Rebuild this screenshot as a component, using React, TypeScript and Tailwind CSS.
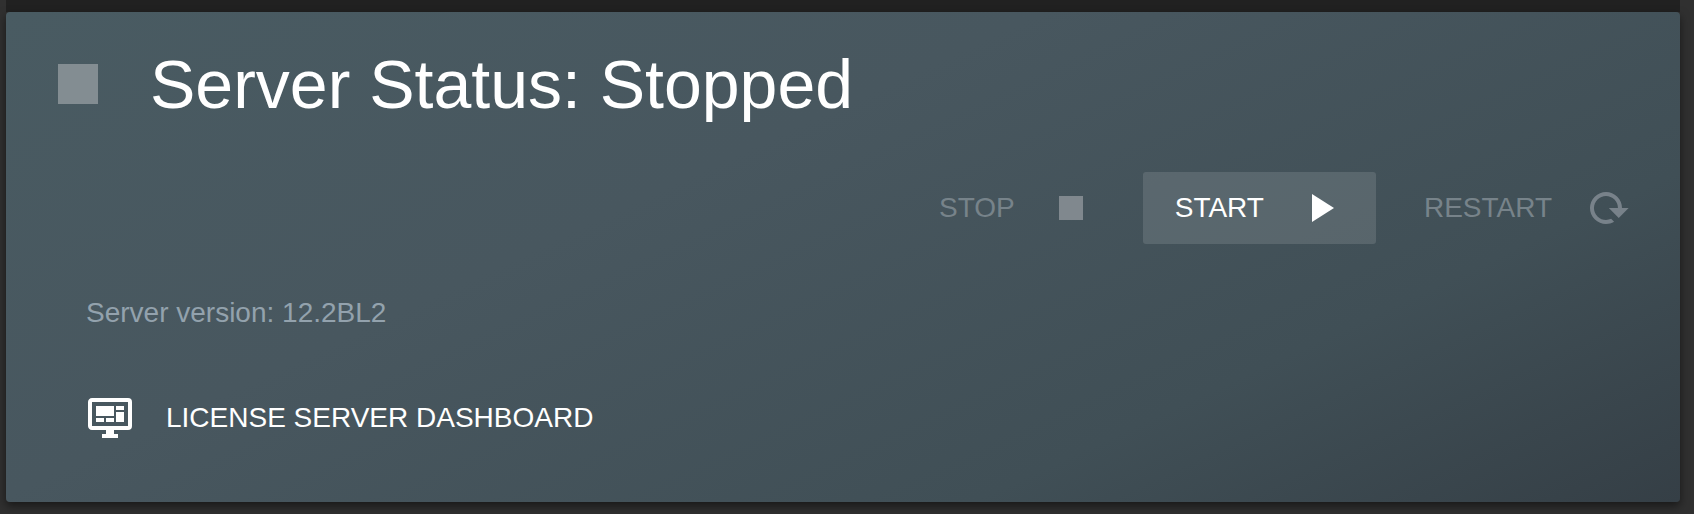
import type { ReactNode } from 'react';
import clsx from 'clsx';

const icons = {
  stop: 'M18,18H6V6H18V18Z',
  play: 'M8,5V19L19,12L8,5Z',
  reload:
    'M19,12H22.32L17.37,16.95L12.42,12H16.97C17,10.46 16.42,8.93 15.24,7.75C12.9,5.41 9.1,5.41 6.76,7.75C4.42,10.09 4.42,13.9 6.76,16.24C8.6,18.08 11.36,18.47 13.58,17.41L15.05,18.88C12,20.69 8,20.29 5.34,17.65C2.22,14.53 2.23,9.47 5.35,6.35C8.5,3.22 13.53,3.21 16.66,6.34C18.22,7.9 19,9.95 19,12Z',
  dashboard:
    'M21,16V4H3V16H21M21,2A2,2 0 0,1 23,4V16A2,2 0 0,1 21,18H14V20H16V22H8V20H10V18H3C1.89,18 1,17.1 1,16V4C1,2.89 1.89,2 3,2H21M5,6H14V11H5V6M15,6H19V8H15V6M19,9V14H15V9H19M5,12H9V14H5V12M10,12H14V14H10V12Z',
};

function Icon({ name, className }: { name: keyof typeof icons; className?: string }) {
  return (
    <svg viewBox="0 0 24 24" fill="currentColor" aria-hidden="true" className={clsx('shrink-0', className)}>
      <path d={icons[name]} />
    </svg>
  );
}

type ActionButtonProps = {
  icon: keyof typeof icons;
  disabled?: boolean;
  iconClass?: string;
  children: ReactNode;
};

function ActionButton({ icon, disabled, iconClass, children }: ActionButtonProps) {
  return (
    <button
      type="button"
      disabled={disabled}
      className={clsx(
        'flex h-[72px] items-center gap-8 rounded-[3px] px-8',
        disabled ? 'text-[#77838a]' : 'bg-white/12 text-white'
      )}
    >
      {children}
      <Icon name={icon} className={clsx('size-12', iconClass)} />
    </button>
  );
}

export default function App() {
  return (
    <main className="min-h-screen bg-[#303030] pr-3.5 pb-3 pl-1.5 font-['Liberation_Sans',Arial,sans-serif] text-[28px] leading-[42px]">
      <div className="h-3 bg-[#212121]" />

      <section className="rounded-[4px] bg-linear-[155deg,#495b62_0%,#48575f_38%,#404f56_74%,#353f46_100%] pb-12 shadow-[0_4px_10px_rgba(0,0,0,0.5)]">
        <header className="flex items-center gap-8 px-8 pt-8">
          <Icon name="stop" className="size-20 text-[#838d92]" />
          <h1 className="text-[68px] leading-[80px] text-white">Server Status: Stopped</h1>
        </header>

        <div className="mt-12 flex justify-end gap-4 pr-4">
          <ActionButton icon="stop" disabled iconClass="text-[#80888e]">
            STOP
          </ActionButton>
          <ActionButton icon="play">START</ActionButton>
          <ActionButton icon="reload" disabled iconClass="text-[#78828a]">
            RESTART
          </ActionButton>
        </div>

        <p className="mt-12 px-20 text-[#93a2ad]">Server version: 12.2BL2</p>

        <div className="mt-12 flex px-12">
          <a href="#dashboard" className="flex h-[72px] items-center gap-8 px-8 text-white">
            <Icon name="dashboard" className="size-12" />
            LICENSE SERVER DASHBOARD
          </a>
        </div>
      </section>
    </main>
  );
}
